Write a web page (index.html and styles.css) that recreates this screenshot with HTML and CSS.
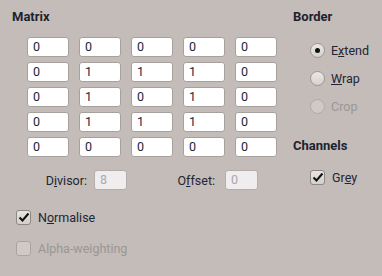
FILE: index.html
```html
<!DOCTYPE html>
<html>
	<head>
		<meta charset="UTF-8">
		<title>Convolution</title>
		<link rel="stylesheet" href="styles.css">
	</head>
	<body>
		<div class="dialog">
			<!--matrix-->
			<div class="left">
				<div class="title">Matrix</div>
				<div class="matrix">
					<span class="entry">0</span><span class="entry">0</span><span class="entry">0</span><span class="entry">0</span><span class="entry">0</span>
					<span class="entry">0</span><span class="entry">1</span><span class="entry">1</span><span class="entry">1</span><span class="entry">0</span>
					<span class="entry">0</span><span class="entry">1</span><span class="entry">0</span><span class="entry">1</span><span class="entry">0</span>
					<span class="entry">0</span><span class="entry">1</span><span class="entry">1</span><span class="entry">1</span><span class="entry">0</span>
					<span class="entry">0</span><span class="entry">0</span><span class="entry">0</span><span class="entry">0</span><span class="entry">0</span>
				</div>
				<div class="params">
					<span class="label">D<u>i</u>visor:</span><span class="entry small off">8</span>
					<span class="label second">O<u>f</u>fset:</span><span class="entry small off">0</span>
				</div>
				<div class="check first"><span class="box on"><svg width="12" height="12" viewBox="0 0 12 12"><path d="M1.5 6.5 L4.5 9.5 L10.5 2.5" fill="none" stroke="#111" stroke-width="2"/></svg></span><span>N<u>o</u>rmalise</span></div>
				<div class="check dim"><span class="box"></span><span>Alpha-weighting</span></div>
			</div>

			<!--border + channels-->
			<div class="right">
				<div class="title">Border</div>
				<div class="radio"><span class="dot on"></span><span>E<u>x</u>tend</span></div>
				<div class="radio"><span class="dot"></span><span><u>W</u>rap</span></div>
				<div class="radio dim"><span class="dot"></span><span>Crop</span></div>
				<div class="title second">Channels</div>
				<div class="check grey"><span class="box on"><svg width="12" height="12" viewBox="0 0 12 12"><path d="M1.5 6.5 L4.5 9.5 L10.5 2.5" fill="none" stroke="#111" stroke-width="2"/></svg></span><span>Gr<u>e</u>y</span></div>
			</div>
		</div>
	</body>
</html>
```

FILE: styles.css
```css
*{
	margin: 0;
	padding: 0;
	box-sizing: border-box;
}
body{
	width: 382px;
	height: 276px;
	background: #c3bcb8;
	font-family: Roboto, "Noto Sans", sans-serif;
	font-size: 12.5px;
	color: #1f2533;
}
.dialog{
	display: flex;
	padding: 8px 0 0 12px;
}
.title{
	font-weight: bold;
	font-size: 13px;
	line-height: 17px;
	color: #1d2230;
}
.left{
	width: 281px;
}
.matrix{
	display: grid;
	grid-template-columns: repeat(5, 42px);
	column-gap: 10px;
	row-gap: 5px;
	margin: 12px 0 0 15px;
}
.entry{
	display: block;
	height: 20px;
	background: #fff;
	border: 1px solid #a7a19e;
	border-radius: 3px;
	padding-left: 5px;
	line-height: 18px;
	color: #1b1f3a;
}
.params{
	display: flex;
	align-items: center;
	margin-top: 13px;
}
.label{
	width: 82px;
	text-align: right;
	padding-right: 7px;
}
.label.second{
	width: 98px;
	padding-right: 10px;
}
.entry.small{
	width: 33px;
}
.entry.off{
	background: #efeded;
	color: #aaa7b4;
	border-color: #b3aeab;
}
.check{
	display: flex;
	align-items: center;
	height: 16px;
	gap: 7px;
}
.check.first{
	margin: 19px 0 0 4px;
}
.check.dim{
	margin: 15px 0 0 4px;
	color: #9b9693;
}
.box{
	width: 15px;
	height: 15px;
	border: 1px solid #8e8885;
	border-radius: 3px;
	background: linear-gradient(#e8e5e3, #d4cfcd);
	display: flex;
	align-items: center;
	justify-content: center;
}
.dim .box{
	border-color: #aaa4a1;
	background: #cfcac7;
}
.radio{
	display: flex;
	align-items: center;
	height: 16px;
	gap: 6px;
	margin: 12px 0 0 17px;
}
.radio:nth-child(2){
	margin-top: 17px;
}
.radio.dim{
	color: #9b9693;
}
.dot{
	width: 15px;
	height: 15px;
	border-radius: 50%;
	border: 1px solid #9c9693;
	background: linear-gradient(#ebe8e6, #d6d1cf);
	display: flex;
	align-items: center;
	justify-content: center;
}
.dim .dot{
	border-color: #b0aaa7;
	background: #cfcac7;
}
.dot.on::after{
	content: "";
	width: 5px;
	height: 5px;
	border-radius: 50%;
	background: #111;
}
.title.second{
	margin-top: 23px;
}
.check.grey{
	margin: 15px 0 0 17px;
}
```
